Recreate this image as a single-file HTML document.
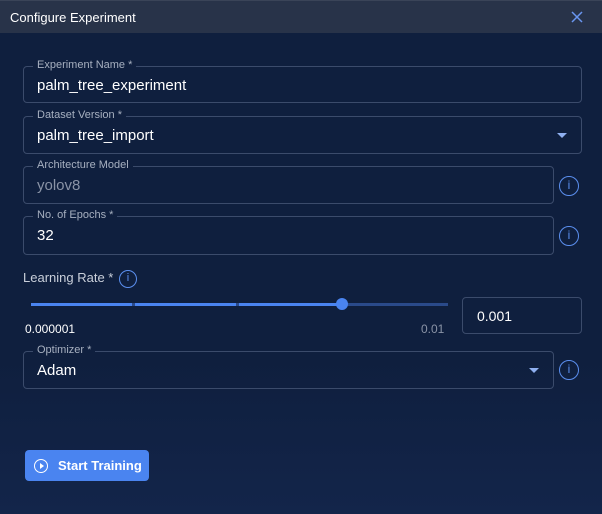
<!DOCTYPE html>
<html><head><style>
*{box-sizing:border-box;margin:0;padding:0}
body{width:602px;height:514px;background:linear-gradient(#0f1f3e,#0f1f3e 70%,#13254a);font-family:"Liberation Sans",sans-serif;position:relative;overflow:hidden;color:#fff}
.hdr{position:absolute;left:0;top:0;width:602px;height:33px;background:#283349;border-top:1px solid #3a4458}
.hdr span{position:absolute;left:10px;top:9px;font-size:13px;color:#fff}
.x{position:absolute;left:571px;top:10px}
.f{position:absolute;border:1px solid #3b4b6b;border-radius:4px}
.f .l{position:absolute;left:9px;top:-8px;font-size:11px;color:#a7b0c0;background:#0f1f3e;padding:0 4px}
.f .v{position:absolute;left:13px;top:10px;font-size:15px;color:#fff}
.arr{position:absolute;right:14px;top:16px;width:0;height:0;border-left:5px solid transparent;border-right:5px solid transparent;border-top:5px solid #8fb0f0}
.info{position:absolute;width:20px;height:20px;border:1.5px solid #5b8fef;border-radius:50%;color:#5b8fef;font-size:12px;text-align:center;line-height:17px;font-family:"Liberation Sans",sans-serif}
</style></head><body>
<div class="hdr"><span>Configure Experiment</span>
<svg class="x" width="12" height="12" viewBox="0 0 12 12"><path d="M1 1L11 11M11 1L1 11" stroke="#6a96f0" stroke-width="1.5"/></svg></div>

<div class="f" style="left:23px;top:66px;width:559px;height:37px"><div class="l">Experiment Name *</div><div class="v">palm_tree_experiment</div></div>
<div class="f" style="left:23px;top:116px;width:559px;height:38px"><div class="l">Dataset Version *</div><div class="v">palm_tree_import</div><div class="arr"></div></div>
<div class="f" style="left:23px;top:166px;width:531px;height:38px"><div class="l">Architecture Model</div><div class="v" style="color:#8a93a6">yolov8</div></div>
<div class="info" style="left:559px;top:176px">i</div>
<div class="f" style="left:23px;top:216px;width:531px;height:39px"><div class="l">No. of Epochs *</div><div class="v">32</div></div>
<div class="info" style="left:559px;top:226px">i</div>

<div style="position:absolute;left:23px;top:270px;font-size:13px;color:#c9cfda">Learning Rate *</div>
<div class="info" style="left:119px;top:270px;width:18px;height:18px;line-height:15px;font-size:11px">i</div>
<div style="position:absolute;left:31px;top:303px;width:417px;height:3px;background:#2a4a8a"></div>
<div style="position:absolute;left:31px;top:303px;width:101px;height:3px;background:#4a84f0"></div>
<div style="position:absolute;left:135px;top:303px;width:101px;height:3px;background:#4a84f0"></div>
<div style="position:absolute;left:239px;top:303px;width:103px;height:3px;background:#4a84f0"></div>
<div style="position:absolute;left:336px;top:298px;width:12px;height:12px;border-radius:50%;background:#4a84f0"></div>
<div style="position:absolute;left:25px;top:322px;font-size:12px;color:#fff">0.000001</div>
<div style="position:absolute;left:421px;top:322px;font-size:12px;color:#8a93a6">0.01</div>
<div class="f" style="left:462px;top:297px;width:120px;height:37px"><div class="v" style="left:14px;font-size:14px">0.001</div></div>

<div class="f" style="left:23px;top:351px;width:531px;height:38px"><div class="l">Optimizer *</div><div class="v">Adam</div><div class="arr"></div></div>
<div class="info" style="left:559px;top:360px">i</div>

<div style="position:absolute;left:25px;top:450px;width:124px;height:31px;background:#4a84f0;border-radius:4px">
<div style="position:absolute;left:9px;top:9px;width:14px;height:14px;border:1.5px solid #fff;border-radius:50%"></div>
<div style="position:absolute;left:15px;top:13px;width:0;height:0;border-top:3px solid transparent;border-bottom:3px solid transparent;border-left:4px solid #fff"></div>
<span style="position:absolute;left:33px;top:8px;font-size:13px;font-weight:bold;color:#fff">Start Training</span></div>
</body></html>
